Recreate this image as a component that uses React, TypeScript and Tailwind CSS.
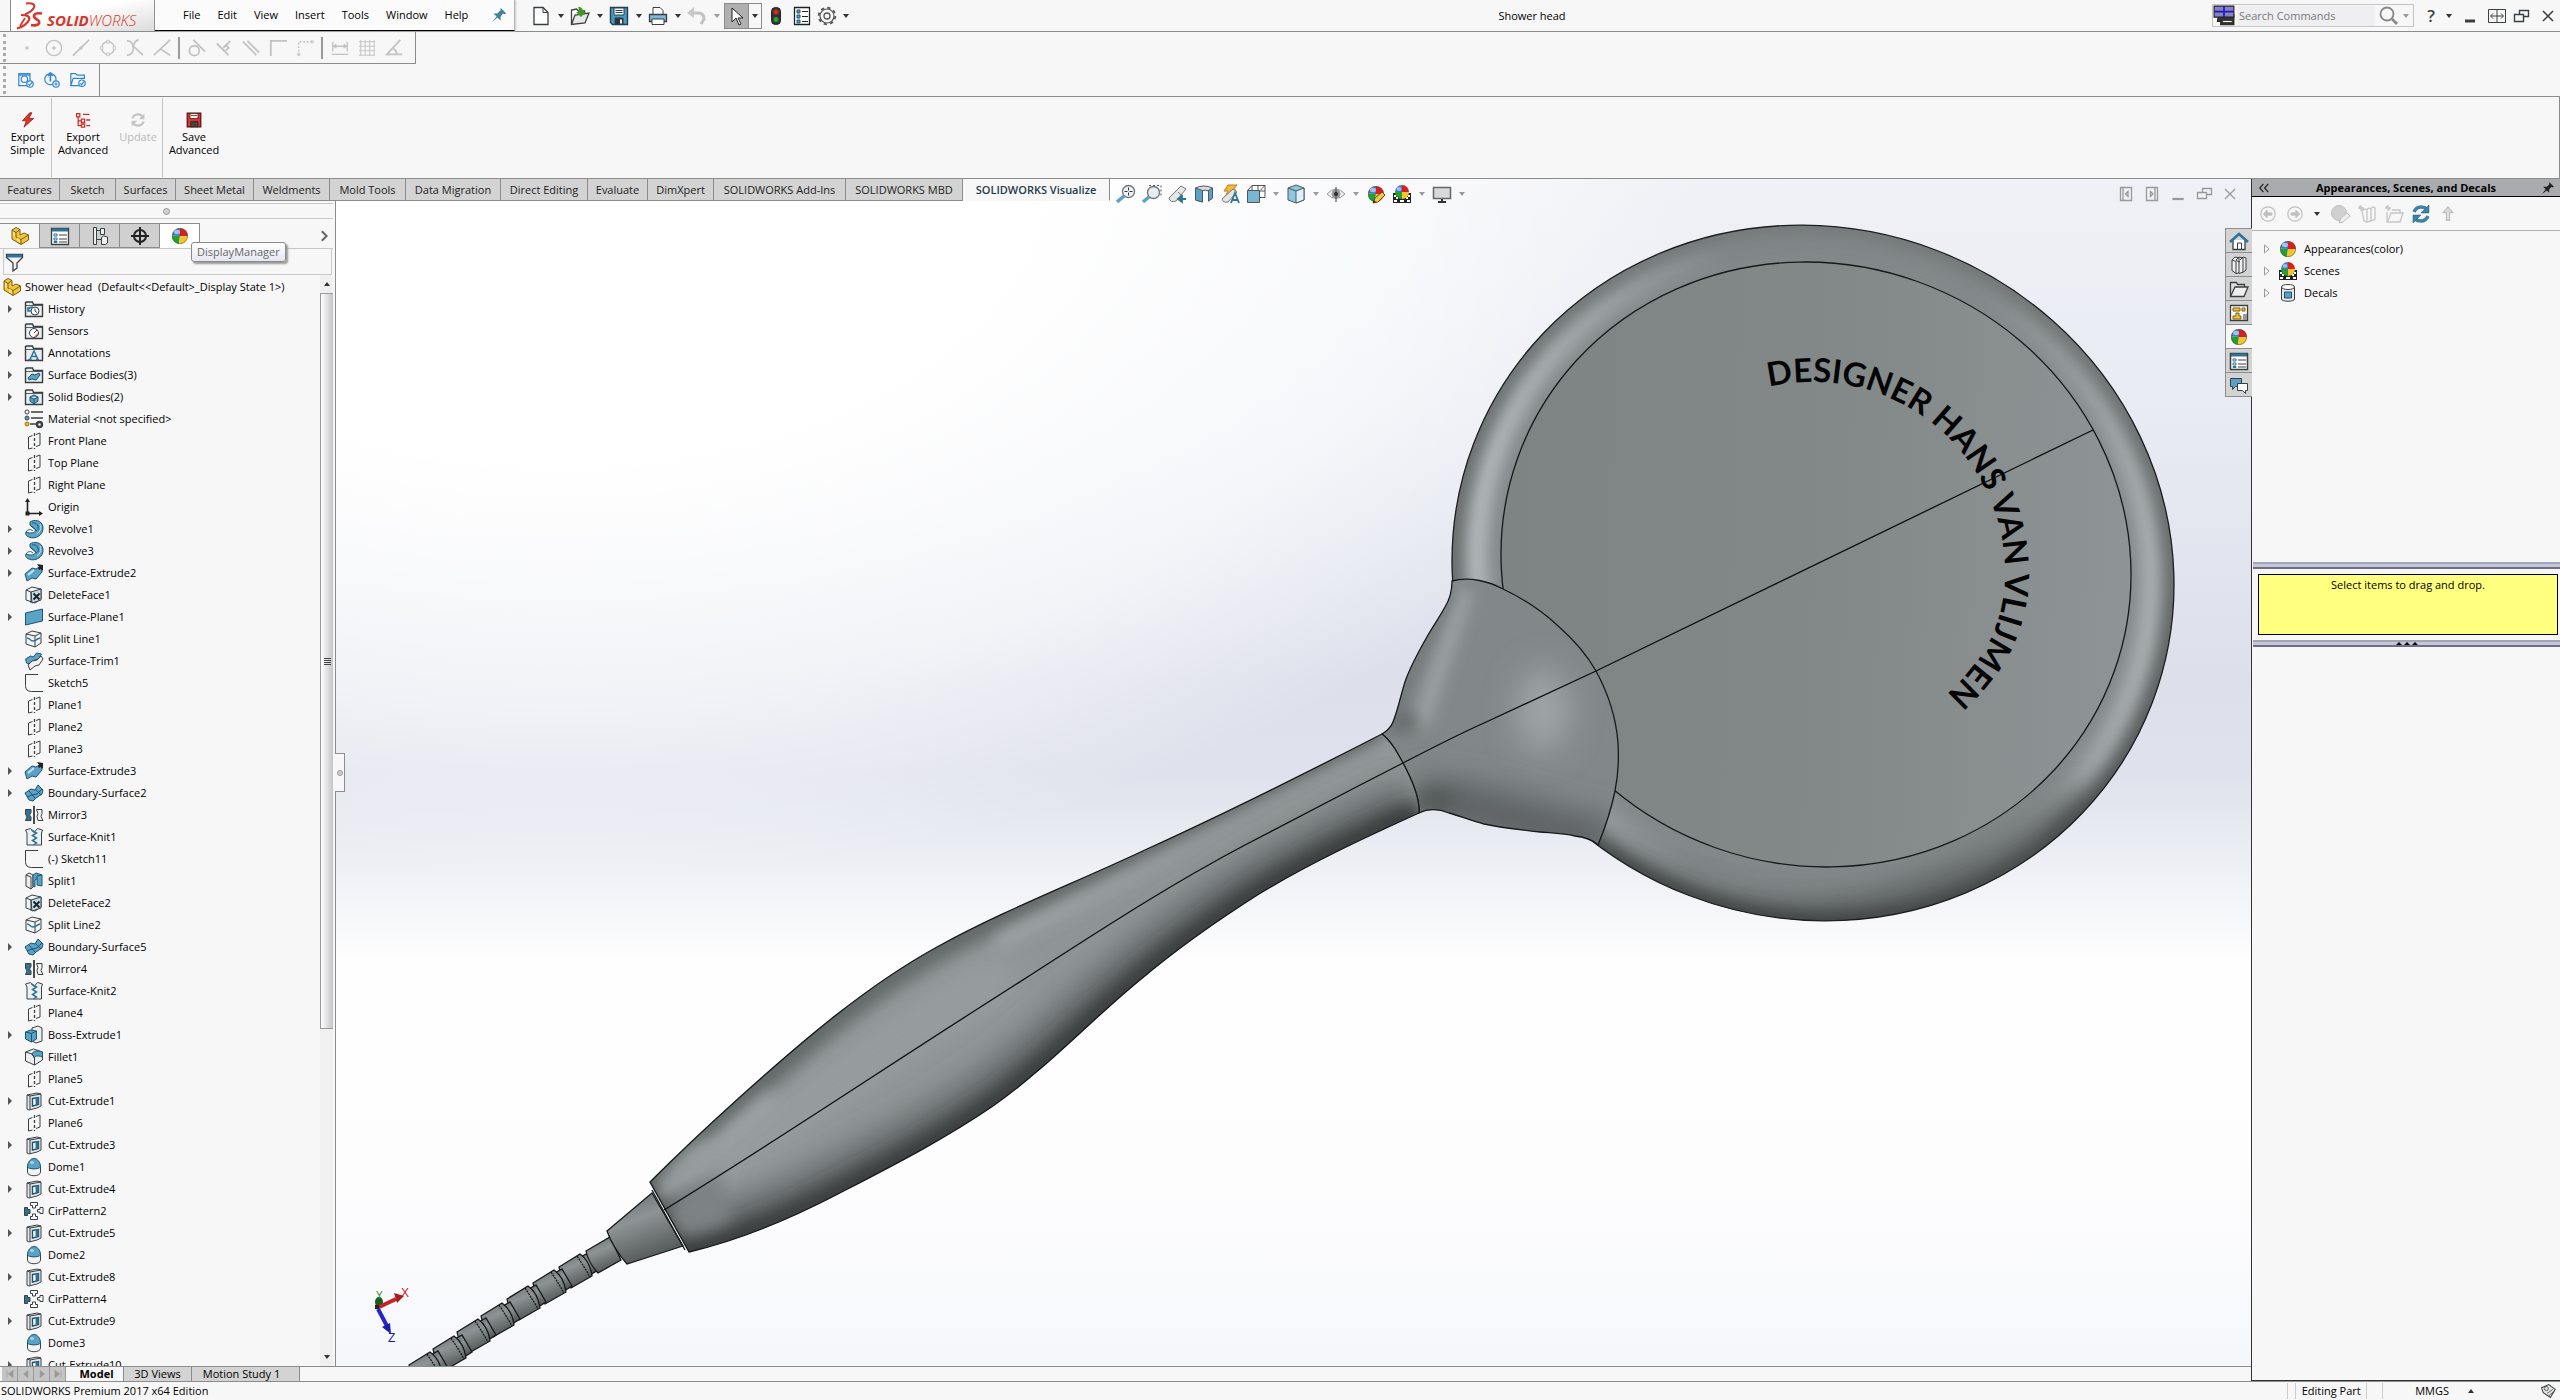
import type { ReactNode } from "react";

// ─── Helpers ──────────────────────────────────────────────────────────────────

interface IconProps {
  children: ReactNode;
  className?: string;
  stroke?: string;
}

function Icon({ children, className = "w-5 h-5", stroke = "#3a3f42" }: IconProps) {
  return (
    <svg viewBox="0 0 20 20" className={`shrink-0 ${className}`} fill="none" stroke={stroke} aria-hidden="true">
      {children}
    </svg>
  );
}

function Caret({ dim = false }: { dim?: boolean }) {
  return (
    <svg viewBox="0 0 6 4" className="w-[6px] h-1" aria-hidden="true">
      <path d="M0 0h6L3 4z" fill={dim ? "#9a9a9a" : "#333"} />
    </svg>
  );
}

function Ball() {
  return (
    <Icon stroke="none">
      <path d="M10 10V2a8 8 0 0 0-8 7.500z" fill="#3e78c8" />
      <path d="M10 10V2a8 8 0 0 1 8 8.500z" fill="#d4201f" />
      <path d="M10 10L2 9.500A8 8 0 0 0 9 18z" fill="#26a02c" />
      <path d="M10 10L9 18a8 8 0 0 0 9-7.500z" fill="#f2c530" />
      <circle cx="10" cy="10" r="7.600" stroke="#444" strokeOpacity=".45" />
      <ellipse cx="7" cy="6" rx="3" ry="2.200" fill="#fff" fillOpacity=".55" />
    </Icon>
  );
}

function SceneBall() {
  return (
    <Icon stroke="none">
      <path d="M1 9h18v10H1z" fill="#222" />
      <path d="M2 11h2v2H2zM16 11h2v2h-2zM4 13h2v2H4zM14 13h2v2h-2zM2 16h3v2H2zM8 16h4v2H8zM15 16h3v2h-3z" fill="#fff" />
      <path d="M10 8V1a7 7 0 0 0-7 7z" fill="#3e78c8" />
      <path d="M10 8V1a7 7 0 0 1 7 7z" fill="#d4201f" />
      <path d="M10 8H3a7 7 0 0 0 7 7z" fill="#26a02c" />
      <path d="M10 8v7a7 7 0 0 0 7-7z" fill="#f2c530" />
      <ellipse cx="7" cy="5" rx="2.500" ry="2" fill="#fff" fillOpacity=".5" />
    </Icon>
  );
}

const BLUE = "#5ba3c6";
const DARK_BLUE = "#2f7396";

// ─── Tree icons ───────────────────────────────────────────────────────────────

function PartIcon() {
  return (
    <Icon stroke="#7a5c10">
      <path d="M2 4l4-2.500 4 2V9l4-2 4.500 2v5L11 18.500 2 13z" fill="#f3c63a" />
      <path d="M2 4l4 2.500 4-3M6 6.500V11l5 2.500L18.500 9M11 13.500v5" />
      <path d="M3 5.500l2 1.500v4l-2-1zM7 11.500l3 2v3l-3-2z" fill="#fbe38c" stroke="none" />
    </Icon>
  );
}

function Folder({ children }: { children: ReactNode }) {
  return (
    <Icon>
      <path d="M1.500 3.500v14h17v-12h-9l-1-2.500h-6z" fill="#e9edef" strokeWidth="1.400" />
      <path d="M1.500 6.500h17" strokeWidth=".8" />
      {children}
    </Icon>
  );
}

const TREE_ICONS: Record<string, ReactNode> = {
  history: (
    <Folder>
      <circle cx="11" cy="12" r="4" fill="#fff" />
      <path d="M11 9.500V12l2 1.500" />
      <path d="M4 11a6 4 0 0 1 5-3M4 8v4h3" stroke={DARK_BLUE} strokeWidth="1.500" />
    </Folder>
  ),
  sensor: (
    <Folder>
      <circle cx="10" cy="12" r="4.500" fill="#fff" />
      <path d="M10 12l3-3" />
      <path d="M14 12a4 4 0 0 1-4 4z" fill="#d34a35" stroke="none" />
    </Folder>
  ),
  annotation: (
    <Folder>
      <path d="M6 16.500L10 8l4 8.500M7.500 13.500h5M4.500 16.500h3M12 16.500h3" stroke={DARK_BLUE} strokeWidth="1.500" />
    </Folder>
  ),
  surfaceFolder: (
    <Folder>
      <path d="M4 13l4-4 3 1 4-2 1 2-4 5-4-1-3 1z" fill={BLUE} stroke="#1e5470" />
    </Folder>
  ),
  solidFolder: (
    <Folder>
      <path d="M6 10l4-2 4 2v4l-4 3-4-3zM6 10l4 2 4-2M10 12v5" fill={BLUE} stroke="#1e5470" />
    </Folder>
  ),
  material: (
    <Icon>
      <path d="M7 3h12M7 9h12M6 15h8" strokeWidth="1.500" />
      <circle cx="3" cy="3" r="2" fill="#fff" />
      <circle cx="3" cy="9" r="2" fill={BLUE} />
      <circle cx="3" cy="15" r="2" fill="#f3b52e" stroke="#9c7413" />
      <circle cx="15.500" cy="15.500" r="2.500" strokeWidth="2.400" />
    </Icon>
  ),
  plane: (
    <Icon>
      <path d="M4.500 6v12l4-1M4.500 6l4-1.500M12 3.500l4-1.500v12l-4 1.500" />
      <path d="M10.500 2v16" strokeDasharray="3 2" strokeWidth="1.300" />
    </Icon>
  ),
  origin: (
    <Icon stroke="#222">
      <path d="M3.500 4v12.500H16" strokeWidth="1.600" />
      <path d="M3.500 1L1 5h5zM19 16.500l-4-2.500v5zM1.500 14.500h4v4h-4z" fill="#222" stroke="none" />
    </Icon>
  ),
  revolve: (
    <Icon stroke="#1e5470">
      <path d="M6 3c4-3 12-2 13 5 1 8-8 13-14 10-3-1-4-3-3-5 5 2 9 1 10-2L6 6z" fill={BLUE} />
      <path d="M2 13c2-3 5-3 7-1M7 7l6 5M8 4c5-1 7 3 6 7" />
      <path d="M16 5c2 4 0 8-3 10" stroke="#bfe0ef" />
    </Icon>
  ),
  surfaceExtrude: (
    <Icon stroke="#1e5470">
      <path d="M1 11l7-6 4 1 5-3 1 6-6 7-4-1-5 3z" fill={BLUE} />
      <path d="M4 12l6-5" stroke="#c6e4f1" strokeWidth="2" />
      <path d="M13 1l6 1v6l-2-2-2 1-1-2 1-1z" fill="#222" stroke="none" />
    </Icon>
  ),
  deleteFace: (
    <Icon>
      <path d="M2 5l6-3 9 2v10l-6 4-9-3z" fill="#f2f4f5" />
      <path d="M7 7l10-3v11l-9 3z" fill="#bfe0ef" />
      <path d="M2 5l5 2v11" />
      <path d="M9.500 8.500l6 6M15.500 8.500l-6 6" stroke="#222" strokeWidth="2" />
    </Icon>
  ),
  surfacePlane: (
    <Icon stroke="#1e5470">
      <path d="M1.500 6l17-4v12l-17 4z" fill={BLUE} />
    </Icon>
  ),
  splitLine: (
    <Icon>
      <path d="M2 5l6-3 9 2v10l-6 4-9-3z" fill="#f2f4f5" />
      <path d="M2 5l9 2 6-3M11 7v11" />
      <path d="M3 9c3 0 3 3 6 3s3-2 7-3" stroke={DARK_BLUE} strokeWidth="1.500" />
    </Icon>
  ),
  surfaceTrim: (
    <Icon>
      <path d="M1.500 8l5-3 3 1 3-4 5 1-3 5-4 1-4 4-4-1z" fill={BLUE} stroke="#1e5470" />
      <path d="M4 14l4-4 5-1 4-4 2 3-4 6-4 1-5 4z" fill="#f0f0f0" />
    </Icon>
  ),
  sketch: (
    <Icon>
      <path d="M14 1.500H1.500v11q0 6 6 6H19" />
    </Icon>
  ),
  boundary: (
    <Icon stroke="#1e5470">
      <path d="M1 10l6-4 4 1 3-5 5 5-1 4-6 4-3 3-4-1z" fill={BLUE} />
      <path d="M5 8l6 7M11 6l6 6M3 14l5-2 5-1 5-5" />
    </Icon>
  ),
  mirror: (
    <Icon>
      <path d="M1.500 4.500H7v3L5.500 10 7 12v3.500H1.500L3 12 1.500 9z" fill={DARK_BLUE} />
      <path d="M12.500 4.500H18v4l-1 3 2 4h-5l-1-4 1-3z" fill="#f2f2f2" />
      <path d="M10 1v18" stroke="#111" strokeWidth="1.500" />
    </Icon>
  ),
  knit: (
    <Icon>
      <path d="M1.500 3l5-1.500 3.500 4 3.500-4 5 1.500-1 3v12H3V6z" fill="#eef1f2" />
      <path d="M7.500 3l5 3-4 2.500 4 2.500-4 2.500 4 2.500-3 2" stroke={DARK_BLUE} strokeWidth="1.500" />
    </Icon>
  ),
  split: (
    <Icon>
      <path d="M2 4l3-2 4 2v12l-2 2-5-3z" fill="#eee" />
      <path d="M2 4l5 2v12" />
      <path d="M9 4l3-2 6 2v11l-5-1V8l-2 1v7l-2-1z" fill={BLUE} stroke="#1e5470" />
      <path d="M13 8V5l5-1" stroke="#1e5470" />
    </Icon>
  ),
  boss: (
    <Icon>
      <path d="M8 3l6-2 4 2v13l-6 2-4-2z" fill="#eee" />
      <path d="M1.500 7l5-2 6 1v8l-5 3-6-3z" fill={BLUE} stroke="#1e5470" />
      <path d="M1.500 7l6 1.500 5-2.500M7.500 8.500V17" stroke="#1e5470" />
    </Icon>
  ),
  fillet: (
    <Icon>
      <path d="M1.500 5l8-3 9 3v8l-8 5-9-4z" fill="#eee" />
      <path d="M8 7c1-3 5-4 10.500-2v5c-5-2-8-1-8 1z" fill={BLUE} stroke="#1e5470" />
      <path d="M1.500 5L8 7l2.500 4v7" />
    </Icon>
  ),
  cut: (
    <Icon>
      <path d="M3 4l10-2 4 1v12l-4 2-8 2-2-1z" fill="#e4e8ea" />
      <path d="M3 4l3 1 11-2M6 5v13.500" />
      <path d="M8.500 7.500l6-1v7l-6 1.500z" fill="#fff" stroke="#1e5470" strokeWidth="1.400" />
      <path d="M11.500 7l3-.5v6.500l-3 .5z" fill={DARK_BLUE} stroke="none" />
    </Icon>
  ),
  dome: (
    <Icon>
      <path d="M3.500 9v6c0 5 13 5 13 0V9z" fill="#f5f5f5" />
      <path d="M3.500 10a6.500 8.500 0 0 1 13 0c-2 2.500-11 2.500-13 0z" fill={BLUE} stroke="#1e5470" />
      <ellipse cx="8" cy="5.500" rx="2" ry="1.500" fill="#fff" fillOpacity=".5" stroke="none" />
    </Icon>
  ),
  pattern: (
    <Icon>
      <path d="M6.500 1.500h7v3h-2V7h-3V4.500h-2zM6.500 18.500h7v-3h-2V13h-3v2.500h-2zM19 6.500v6h-3v-1.500h-2.500V8.500H16v-2z" fill="#fff" />
      <path d="M.5 6.500h3v2H6v4H3.500v2h-3z" fill={DARK_BLUE} />
    </Icon>
  ),
};

interface TreeItem {
  icon: string;
  label: string;
  open?: boolean;
}

const TREE: TreeItem[] = [
  { icon: "history", label: "History", open: true },
  { icon: "sensor", label: "Sensors" },
  { icon: "annotation", label: "Annotations", open: true },
  { icon: "surfaceFolder", label: "Surface Bodies(3)", open: true },
  { icon: "solidFolder", label: "Solid Bodies(2)", open: true },
  { icon: "material", label: "Material <not specified>" },
  { icon: "plane", label: "Front Plane" },
  { icon: "plane", label: "Top Plane" },
  { icon: "plane", label: "Right Plane" },
  { icon: "origin", label: "Origin" },
  { icon: "revolve", label: "Revolve1", open: true },
  { icon: "revolve", label: "Revolve3", open: true },
  { icon: "surfaceExtrude", label: "Surface-Extrude2", open: true },
  { icon: "deleteFace", label: "DeleteFace1" },
  { icon: "surfacePlane", label: "Surface-Plane1", open: true },
  { icon: "splitLine", label: "Split Line1" },
  { icon: "surfaceTrim", label: "Surface-Trim1" },
  { icon: "sketch", label: "Sketch5" },
  { icon: "plane", label: "Plane1" },
  { icon: "plane", label: "Plane2" },
  { icon: "plane", label: "Plane3" },
  { icon: "surfaceExtrude", label: "Surface-Extrude3", open: true },
  { icon: "boundary", label: "Boundary-Surface2", open: true },
  { icon: "mirror", label: "Mirror3" },
  { icon: "knit", label: "Surface-Knit1" },
  { icon: "sketch", label: "(-) Sketch11" },
  { icon: "split", label: "Split1" },
  { icon: "deleteFace", label: "DeleteFace2" },
  { icon: "splitLine", label: "Split Line2" },
  { icon: "boundary", label: "Boundary-Surface5", open: true },
  { icon: "mirror", label: "Mirror4" },
  { icon: "knit", label: "Surface-Knit2" },
  { icon: "plane", label: "Plane4" },
  { icon: "boss", label: "Boss-Extrude1", open: true },
  { icon: "fillet", label: "Fillet1" },
  { icon: "plane", label: "Plane5" },
  { icon: "cut", label: "Cut-Extrude1", open: true },
  { icon: "plane", label: "Plane6" },
  { icon: "cut", label: "Cut-Extrude3", open: true },
  { icon: "dome", label: "Dome1" },
  { icon: "cut", label: "Cut-Extrude4", open: true },
  { icon: "pattern", label: "CirPattern2" },
  { icon: "cut", label: "Cut-Extrude5", open: true },
  { icon: "dome", label: "Dome2" },
  { icon: "cut", label: "Cut-Extrude8", open: true },
  { icon: "pattern", label: "CirPattern4" },
  { icon: "cut", label: "Cut-Extrude9", open: true },
  { icon: "dome", label: "Dome3" },
  { icon: "cut", label: "Cut-Extrude10", open: true },
];

// ─── Title bar ────────────────────────────────────────────────────────────────

const QUICK_TOOLS: { label: string; dim?: boolean; icon: ReactNode }[] = [
  {
    label: "New",
    icon: (
      <Icon>
        <path d="M3 1.500h9l5 5v12H3z" fill="#fff" strokeWidth="1.300" />
        <path d="M12 1.500v5h5" />
      </Icon>
    ),
  },
  {
    label: "Open",
    icon: (
      <Icon>
        <path d="M1.500 18V4l5-1 2 2h6v4" fill="#fff" strokeWidth="1.300" />
        <path d="M1.500 18.500L5 9l14-2-4 10z" fill="#e8e8e8" strokeWidth="1.300" />
        <path d="M8 1c4 0 5 2 5 5h3l-5 5-5-5h3c0-2 0-3-1-5z" fill="#3e9a1e" stroke="none" />
      </Icon>
    ),
  },
  {
    label: "Save",
    icon: (
      <Icon stroke="#1d4356">
        <path d="M1.500 1.500h17v17h-15l-2-2z" fill="#4f97bb" strokeWidth="1.400" />
        <path d="M5 2h10v7H5z" fill="#fff" />
        <path d="M6.500 4.500h7M6.500 6.500h7" />
        <path d="M6 12h8v6.500H6z" fill="#333" />
        <path d="M11 13.500h2v4h-2z" fill="#eee" stroke="none" />
      </Icon>
    ),
  },
  {
    label: "Print",
    icon: (
      <Icon>
        <path d="M5 8V1.500h7l3 3V8" fill="#fff" />
        <path d="M1.500 8.500h17v7h-17z" fill="#7db9d6" strokeWidth="1.300" />
        <path d="M4 13h12v5.500H4z" fill="#fff" />
      </Icon>
    ),
  },
  {
    label: "Undo",
    dim: true,
    icon: (
      <Icon stroke="#c2c2c2">
        <path d="M3 7h8q6 0 6 6l-3 5" strokeWidth="3" />
        <path d="M7 1v11L0 7z" fill="#c9c9c9" stroke="none" />
      </Icon>
    ),
  },
];

function TitleBar() {
  return (
    <header className="flex h-8 shrink-0 border-b border-[#8c8c8c] pl-[10px]">
      <div className="flex w-[145px] items-center gap-1 border-x border-[#8c8c8c] bg-linear-to-br from-white from-40% to-[#dcdcdc] pl-1 text-[#d2362c]">
        <svg viewBox="0 0 28 28" className="w-7 h-7 shrink-0" fill="none" stroke="#d2362c" aria-hidden="true">
          <path d="M11 1.500q10-1 8 4-2 4-9 7" strokeWidth="2" />
          <path d="M6 13q10 0 8 5-3 6-12 8.500" strokeWidth="2.200" />
          <path d="M10 16L5 24" strokeWidth="1.800" />
          <path d="M27 11.500q-7-1-8 2-.5 2 3 4 4 2.500 1 5-3 1.500-7 .5" strokeWidth="2.600" />
        </svg>
        <span className="pt-2 text-[15px] italic leading-4 font-['Open_Sans',sans-serif]">
          <b>SOLID</b>
          <span className="font-light">WORKS</span>
        </span>
      </div>

      <nav className="flex w-[360px] items-center gap-[17px] border-r border-b border-r-[#b5b5b5] border-b-black bg-[#fbfbfb] pl-7 pr-[7px] shadow-[1px_0_2px_#ccc]">
        {["File", "Edit", "View", "Insert", "Tools", "Window", "Help"].map((item) => (
          <button key={item}>{item}</button>
        ))}
        <button aria-label="Pin menu" className="ml-auto">
          <Icon className="w-4 h-4" stroke="none">
            <path d="M12 1l7 7-2 1-2-1-3 4v5l-4-4-7 6 6-7-4-4h5l4-4z" fill="#3f7f9f" />
          </Icon>
        </button>
      </nav>

      <div className="flex items-center pl-[14px]">
        {QUICK_TOOLS.map((tool) => (
          <div key={tool.label} className="flex items-center">
            <button aria-label={tool.label} className="flex w-6 justify-center">{tool.icon}</button>
            <button aria-label={`${tool.label} options`} className="flex w-[15px] justify-center">
              <Caret dim={tool.dim} />
            </button>
          </div>
        ))}
        <button aria-label="Select" className="flex h-[26px] w-[25px] items-center justify-center border border-[#8c8c8c] bg-[#b0b0b0]">
          <Icon stroke="#222">
            <path d="M5 2v14l4-4 3 7 2-1-3-6h5z" fill="#fff" />
          </Icon>
        </button>
        <button aria-label="Select options" className="flex h-[26px] w-[13px] items-center justify-center border border-l-0 border-[#8c8c8c]">
          <Caret />
        </button>
        <button aria-label="Rebuild" className="flex w-7 justify-center">
          <Icon stroke="#222">
            <rect x="5.500" y="1.500" width="9" height="17" rx="4" fill="#333" />
            <circle cx="10" cy="6" r="2.500" fill="#d32a1e" stroke="none" />
            <circle cx="10" cy="13.500" r="2.500" fill="#2ba02b" stroke="none" />
          </Icon>
        </button>
        <button aria-label="File properties" className="flex w-6 justify-center">
          <Icon stroke="#222">
            <path d="M2.500 1.500h15v17h-15z" fill="#fff" strokeWidth="1.300" />
            <path d="M5 4h3v3H5zM5 9h3v3H5zM5 14h3v3H5z" fill={BLUE} stroke="#1e5470" />
            <path d="M10 5.500h6M10 10.500h6M10 15.500h6" />
          </Icon>
        </button>
        <button aria-label="Options" className="flex w-[26px] justify-center">
          <Icon stroke="#555">
            <circle cx="10" cy="10" r="7" strokeWidth="1.200" />
            <circle cx="10" cy="10" r="8.300" strokeWidth="1.800" strokeDasharray="3.300 3.220" />
            <circle cx="10" cy="10" r="3" strokeWidth="1.300" />
          </Icon>
        </button>
        <button aria-label="More options" className="flex w-3 justify-center">
          <Caret />
        </button>
      </div>

      <h1 className="flex-1 self-center text-center">Shower head</h1>

      <label className="flex h-[23px] w-[202px] items-center self-center border border-[#c4c4c4]">
        <Icon className="w-[22px] h-[22px]" stroke="#222">
          <path d="M5 9h14v9H7v-3H4z" fill="#333" />
          <path d="M9 15h8" stroke="#fff" />
          <path d="M1 1h18v10H1z" fill="#8583c4" />
          <path d="M10 1v10M1 6h18" stroke="#1c1cb4" strokeWidth="1.500" />
        </Icon>
        <input
          type="text"
          aria-label="Search commands"
          placeholder="Search Commands"
          className="ml-[2px] h-5 w-[138px] bg-[#efeff2] pl-[2px] text-[11px] outline-none placeholder:text-[#777]"
        />
        <Icon className="ml-1 w-5 h-5" stroke="#888">
          <circle cx="8" cy="8" r="6.500" strokeWidth="1.800" />
          <path d="M13 13l5 5" strokeWidth="2.600" />
        </Icon>
        <span className="ml-1">
          <Caret dim />
        </span>
      </label>
      <div className="flex shrink-0 items-center">
        <button aria-label="Help" className="ml-[5px] w-6 text-center text-[17px] leading-6 font-semibold text-[#444]">?</button>
        <button aria-label="Help options" className="flex w-3 justify-center"><Caret /></button>
        <button aria-label="Minimize" className="ml-[3px] flex w-6 justify-center">
          <Icon><path d="M5 15h10" strokeWidth="3" /></Icon>
        </button>
        <button aria-label="Span displays" className="ml-[3px] flex w-6 justify-center">
          <Icon>
            <path d="M1.500 3.500h17v13h-17zM10 3.500v13M4 10h12M6 7.500L3.500 10 6 12.500M14 7.500l2.500 2.500-2.500 2.500" />
          </Icon>
        </button>
        <button aria-label="Restore" className="flex w-6 justify-center">
          <Icon><path d="M8.500 9V4.500h9v6H12M3.500 8.500h9v7h-9z" strokeWidth="1.400" /></Icon>
        </button>
        <button aria-label="Close" className="ml-[3px] flex w-6 justify-center">
          <Icon><path d="M5 5l10 10M15 5L5 15" strokeWidth="1.500" /></Icon>
        </button>
      </div>
    </header>
  );
}

// ─── Toolbars ─────────────────────────────────────────────────────────────────

const SNAP_GROUPS: ReactNode[][] = [
  [
    <circle cx="10" cy="10" r="1.500" fill="#d0d0d0" />,
    <><circle cx="10" cy="10" r="8.500" strokeWidth="1.500" /><circle cx="10" cy="10" r="1.500" fill="#d0d0d0" /></>,
    <><path d="M1 18.500L19 1" strokeWidth="1.800" /><circle cx="10" cy="10" r="1.500" fill="#d0d0d0" /></>,
    <><circle cx="10" cy="10" r="7" strokeWidth="1.500" /><path d="M8.500 1.500h3v3h-3zM8.500 15.500h3v3h-3zM1.500 8.500h3v3h-3zM15.500 8.500h3v3h-3z" fill="#eee" strokeWidth=".8" /></>,
    <path d="M1 2q7 0 7 8t-7 8M14 1q-5 1-6 8M8 8l11 10" strokeWidth="1.800" />,
    <path d="M19 1L1 18M8 11l11 7" strokeWidth="1.800" />,
  ],
  [
    <><circle cx="7" cy="13" r="5.500" strokeWidth="2" /><path d="M6 1l13 13" strokeWidth="2" /></>,
    <path d="M2 5l13 13M17 2L9 10M9 10l4-3 2 3-3 3" strokeWidth="2" />,
    <path d="M1 3l15 15M6 2l13 13" strokeWidth="2" />,
    <path d="M2 19V2h18" strokeWidth="2" />,
    <><path d="M3 18V3h15" strokeDasharray="2 2" strokeWidth="1.500" /><circle cx="18" cy="3" r="1.500" /><circle cx="3" cy="17" r="1.500" /></>,
  ],
  [
    <path d="M2 3v11M18 3v11M3 8h14M6 6L3 8l3 2M14 6l3 2-3 2M1 17h18" strokeWidth="1.500" />,
    <path d="M1 3h18M1 8h18M1 13h18M1 18h18M3 1v18M8 1v18M13 1v18M18 1v18" />,
    <path d="M17 1L2 17h17M8 10q5 2 5 7" strokeWidth="2" />,
  ],
];

function Grip() {
  return (
    <span className="flex w-[13px] items-center pl-[3px]">
      <span className="h-7 border-l-3 border-dotted border-[#aaa]" />
    </span>
  );
}

function Toolbars() {
  return (
    <>
      <div className="flex h-8 w-[416px] shrink-0 items-stretch border-r border-b border-[#8c8c8c]">
        <Grip />
        {SNAP_GROUPS.map((group, g) => (
          <div key={g} className="flex items-center">
            {g > 0 && <span className="mx-[3px] h-[22px] w-[2px] bg-[#9a9a9a]" />}
            {group.map((glyph, i) => (
              <button key={i} aria-label={`Snap ${g + 1}.${i + 1}`} className="flex w-[27px] justify-center">
                <Icon className="w-[18px] h-[18px]" stroke="#c2c2c2">{glyph}</Icon>
              </button>
            ))}
          </div>
        ))}
      </div>
      <div className="flex h-[33px] shrink-0 border-b border-[#8c8c8c]">
        <div className="flex w-[100px] items-center self-stretch border-r border-[#8c8c8c]">
          <Grip />
          <button aria-label="Inspect part" className="flex w-[26px] justify-center">
            <Icon className="w-4 h-4" stroke="#2f86d6">
              <path d="M1 2h14v15H1zM1 2v2h14" strokeWidth="1.500" />
              <circle cx="8" cy="9" r="4" strokeWidth="1.500" />
              <circle cx="15" cy="15" r="4" fill="#fff" strokeWidth="1.500" />
              <path d="M13 15l1.500 2 3-4" strokeWidth="1.500" />
            </Icon>
          </button>
          <button aria-label="Add balloon" className="flex w-[26px] justify-center">
            <Icon className="w-4 h-4" stroke="#2f86d6">
              <circle cx="8" cy="9" r="7" strokeWidth="1.500" />
              <path d="M8 1v11M5 5l3-4 3 4" strokeWidth="2" />
              <circle cx="15" cy="15" r="4" fill="#fff" strokeWidth="1.500" />
              <path d="M13 15h4M15 13v4" strokeWidth="1.500" />
            </Icon>
          </button>
          <button aria-label="Open project" className="flex w-[26px] justify-center">
            <Icon className="w-4 h-4" stroke="#2f86d6">
              <path d="M1 17V2h6l2 2h9v4H4L1 17h12" strokeWidth="1.500" />
              <circle cx="15" cy="14" r="4" fill="#fff" strokeWidth="1.500" />
              <path d="M13 14l1.500 2 3-4" strokeWidth="1.500" />
            </Icon>
          </button>
        </div>
      </div>
    </>
  );
}

function Ribbon() {
  return (
    <div className="flex h-[82px] shrink-0 border-r border-b border-[#8c8c8c] py-px leading-[13px]">
      <button className="flex w-[52px] flex-col items-center gap-[2px] border-r border-[#c4c4c4] pl-1 pt-[14px]">
        <Icon className="w-4 h-4" stroke="#8a1f1c">
          <path d="M12 1L3 11h5l-3 8 12-11h-6l4-7z" fill="#d8352b" />
        </Icon>
        <span>Export<br />Simple</span>
      </button>
      <div className="flex border-r border-[#c4c4c4]">
        <button className="flex w-[62px] flex-col items-center gap-[2px] pt-[14px]">
          <Icon className="w-4 h-4" stroke="#c9302c">
            <path d="M2 2h4v4H2zM8 9h4v4H8zM8 15h4v4H8zM4 6v11h4M4 11h4M10 3h8M14 10h5M14 17h5" strokeWidth="1.600" />
          </Icon>
          <span>Export<br />Advanced</span>
        </button>
        <button disabled className="flex w-12 flex-col items-center gap-[2px] pt-[14px] text-[#b9b9b9]">
          <Icon className="w-4 h-4" stroke="#c6c6c6">
            <path d="M3 8q2-5 7-5 4 0 6 3M17 12q-2 5-7 5-4 0-6-3" strokeWidth="3" />
            <path d="M18 2v7h-7zM2 18v-7h7z" fill="#c6c6c6" stroke="none" />
          </Icon>
          <span>Update</span>
        </button>
      </div>
      <button className="flex w-[62px] flex-col items-center gap-[2px] pt-[14px]">
        <Icon className="w-4 h-4" stroke="#4a1513">
          <path d="M1.500 1.500h17v17h-17z" fill="#cf3a34" strokeWidth="1.500" />
          <path d="M5 2h10v6H5z" fill="#fff" />
          <path d="M6 4.500h8" />
          <path d="M6 12h9v6.500H6z" fill="#444" />
        </Icon>
        <span>Save<br />Advanced</span>
      </button>
    </div>
  );
}

// ─── Command tabs + view toolbar ──────────────────────────────────────────────

const COMMAND_TABS = [
  { label: "Features", width: "w-[60px]" },
  { label: "Sketch", width: "w-14" },
  { label: "Surfaces", width: "w-15" },
  { label: "Sheet Metal", width: "w-[78px]" },
  { label: "Weldments", width: "w-[76px]" },
  { label: "Mold Tools", width: "w-[76px]" },
  { label: "Data Migration", width: "w-[95px]" },
  { label: "Direct Editing", width: "w-[87px]" },
  { label: "Evaluate", width: "w-[60px]" },
  { label: "DimXpert", width: "w-[66px]" },
  { label: "SOLIDWORKS Add-Ins", width: "w-[132px]" },
  { label: "SOLIDWORKS MBD", width: "w-[117px]" },
];

const VIEW_TOOLS: { label: string; icon: ReactNode; menu?: boolean }[] = [
  {
    label: "Zoom to fit",
    icon: (
      <Icon stroke="#777">
        <path d="M1 18l7-6" stroke={BLUE} strokeWidth="3.500" />
        <circle cx="12.500" cy="7.500" r="6" fill="#eef4f7" strokeWidth="1.400" />
        <path d="M12.500 3.500v3M12.500 8.500v3M8.500 7.500h3M13.500 7.500h3" stroke="#333" />
      </Icon>
    ),
  },
  {
    label: "Zoom to area",
    icon: (
      <Icon stroke="#777">
        <path d="M7 1.500h12v12" strokeDasharray="2 2" stroke="#555" />
        <path d="M1 18l6-5" stroke={BLUE} strokeWidth="3.500" />
        <circle cx="11.500" cy="8.500" r="6" fill="#e4eef3" strokeWidth="1.400" />
      </Icon>
    ),
  },
  {
    label: "Previous view",
    icon: (
      <Icon stroke="#777">
        <path d="M1 14L13 2l5 3-10 12q-6 2-7-3z" fill="#e6e6e6" />
        <path d="M10 8l4 4" />
        <path d="M18 15h-6M14 12l-4 3 4 3z" fill={DARK_BLUE} stroke={DARK_BLUE} strokeWidth="1.800" />
      </Icon>
    ),
  },
  {
    label: "Section view",
    icon: (
      <Icon stroke="#4b5a61">
        <path d="M1.500 4q8-4 17 0v10l-4 3V7q-4-2-6 0v11l-7-2z" fill="#d8dadb" />
        <path d="M1.500 4l7 2.500V18l-7-2zM14.500 6.500l4-2.500v10l-4 3z" fill={BLUE} />
      </Icon>
    ),
  },
  {
    label: "Dynamic annotation views",
    icon: (
      <Icon stroke="#777">
        <path d="M8 1h9l-4 5h3L5 13l3-6H4z" fill="#f4b63c" stroke="#b87d19" />
        <path d="M2 15L13 5l4 3-9 10q-5 1-6-3z" fill="#e6e6e6" />
        <path d="M11 19l4-10 4 10M13 16h5" stroke={DARK_BLUE} strokeWidth="1.800" />
      </Icon>
    ),
  },
  {
    label: "View orientation",
    menu: true,
    icon: (
      <Icon stroke="#555">
        <path d="M6 1.500h13v12H6zM12 1.500v12M6 7h13M1.500 6.500L6 1.500M19 1.500L14 6.500" fill="#fff" />
        <path d="M1.500 6.500h12v12h-12z" fill="#79b6d2" />
      </Icon>
    ),
  },
  {
    label: "Display style",
    menu: true,
    icon: (
      <Icon stroke="#4b5a61">
        <path d="M2 4l8-3 8 3v12l-8 3-8-3z" fill="#8fc6de" />
        <path d="M10 7l8-3v12l-8 3z" fill="#dff0f7" />
        <path d="M2 4l8 3" />
      </Icon>
    ),
  },
  {
    label: "Hide or show items",
    menu: true,
    icon: (
      <Icon stroke="#999">
        <path d="M1 10q9-10 18 0-9 9-18 0z" fill="#ececec" />
        <circle cx="10" cy="10" r="4" fill="#999" />
        <circle cx="10" cy="10" r="2" fill="#222" stroke="none" />
        <path d="M10 3v15" stroke="#444" />
      </Icon>
    ),
  },
  {
    label: "Edit appearance",
    icon: (
      <span className="relative flex">
        <Ball />
        <svg viewBox="0 0 20 20" className="absolute inset-0 w-5 h-5" aria-hidden="true">
          <path d="M7 19l2-5 7-6 3 3-7 7z" fill="#f0c64c" stroke="#6b4a12" />
          <path d="M7 19l1-3 2 2z" fill="#222" />
        </svg>
      </span>
    ),
  },
  { label: "Apply scene", menu: true, icon: <SceneBall /> },
  {
    label: "View settings",
    menu: true,
    icon: (
      <Icon stroke="#666">
        <path d="M1.500 3.500h17v11h-17z" fill="#d9d9d9" strokeWidth="1.500" />
        <path d="M10 15v3M6 18h8" stroke="#333" strokeWidth="2" />
      </Icon>
    ),
  },
];

function CommandTabs() {
  return (
    <div className="relative flex h-[30px] shrink-0">
      <div className="flex h-[22px] text-[#222]">
        {COMMAND_TABS.map((tab) => (
          <button
            key={tab.label}
            className={`${tab.width} border-r border-b border-[#8c8c8c] bg-[#d3d3d3] text-center whitespace-nowrap`}
          >
            {tab.label}
          </button>
        ))}
        <button className="w-[147px] border-r border-b border-r-[#8c8c8c] border-b-[#f7f7f7] bg-[#f7f7f7] text-center font-semibold whitespace-nowrap text-[#1e3c4c]">
          SOLIDWORKS Visualize
        </button>
      </div>
      <div className="flex flex-1 items-center pl-[3px]">
        {VIEW_TOOLS.map((tool) => (
          <div key={tool.label} className="flex items-center">
            <button aria-label={tool.label} className="flex w-[26px] justify-center">{tool.icon}</button>
            {tool.menu && (
              <button aria-label={`${tool.label} menu`} className="flex w-[14px] justify-center">
                <Caret dim />
              </button>
            )}
          </div>
        ))}
      </div>
      <div className="flex items-center pr-2">
        {[
          { label: "Collapse left pane", d: "M4.500 3.500h11v13h-11zM7 3v14M12 7.500L9.500 10l2.500 2.500z" },
          { label: "Collapse right pane", d: "M4.500 3.500h11v13h-11zM13 3v14M8.500 7.500L11 10l-2.500 2.500z" },
          { label: "Minimize document", d: "M5 14.500h10v1H5z" },
          { label: "Restore document", d: "M8.500 9V4.500h9v6H12M3.500 8.500h9v6h-9z" },
          { label: "Close document", d: "M5 5l10 10M15 5L5 15" },
        ].map((item) => (
          <button key={item.label} aria-label={item.label} className="flex w-[26px] justify-center">
            <Icon stroke="#999"><path d={item.d} strokeWidth="1.300" /></Icon>
          </button>
        ))}
      </div>
    </div>
  );
}

// ─── 3D model ─────────────────────────────────────────────────────────────────

const HANDLE_TOP =
  "M1382 734C1304 774 1226 813 1147 849C1075 883 1004 910 937 947C866 986 800 1043 740 1097C710 1124 680 1152 650 1182";
const HANDLE_BOTTOM =
  "L689 1252C740 1240 790 1219 838 1194C892 1166 945 1139 993 1106C1047 1068 1091 1020 1140 980C1178 948 1218 920 1259 894C1310 863 1364 838 1419 813";
const RING = "C1420 797 1410 776 1403 763C1397 752 1391 741 1382 734";
const HANDLE = `${HANDLE_TOP}${HANDLE_BOTTOM}${RING}Z`;
const NECK =
  "M1382 734C1387 731 1391 727 1393 722C1399 707 1401 693 1406 679C1412 663 1420 649 1428 635C1434 625 1440 616 1445 607C1450 599 1452 591 1452 581C1470 576 1490 582 1503 589C1522 598 1541 610 1557 625C1573 639 1586 653 1596 671C1608 693 1616 717 1618 743C1619 760 1618 776 1615 791C1611 811 1605 828 1598 845C1592 839 1583 837 1575 836C1563 833 1551 833 1540 832C1521 830 1502 828 1484 824C1472 821 1460 816 1449 813C1439 809 1429 808 1419 813C1420 797 1410 776 1403 763C1397 752 1391 741 1382 734Z";
const CENTER_LINE =
  "M664 1210C770 1145 874 1075 979 1008C1066 953 1152 894 1245 845C1297 818 1350 790 1403 763C1430 749 1457 735 1484 723L1596 671L2093 430";
// hose segments, from the cone down to the edge of the view
const BEADS = [
  [559, 1267], [533, 1283], [507, 1299], [481, 1316], [457, 1332], [433, 1349], [409, 1365],
];

function Viewport() {
  return (
    <svg
      viewBox="0 179 2251 1187"
      preserveAspectRatio="xMinYMin slice"
      className="absolute inset-0 w-full h-full"
      role="img"
      aria-label="Shower head model"
    >
      <defs>
        <linearGradient id="sky" x1="0" y1="0" x2="0" y2="1">
          <stop offset="0" stopColor="#f0f1f6" />
          <stop offset=".2" stopColor="#e8ebf3" />
          <stop offset=".42" stopColor="#dddfeb" />
          <stop offset=".5" stopColor="#dfe1ec" />
          <stop offset=".57" stopColor="#eceef4" />
          <stop offset=".66" stopColor="#fefefe" />
          <stop offset=".85" stopColor="#fdfdfe" />
          <stop offset="1" stopColor="#f6f7fb" />
        </linearGradient>
        <radialGradient id="glow" gradientUnits="userSpaceOnUse" cx="0" cy="0" r="1" gradientTransform="translate(560 179) scale(1150 700)">
          <stop offset=".4" stopColor="#fff" />
          <stop offset=".75" stopColor="#fff" stopOpacity=".6" />
          <stop offset="1" stopColor="#fff" stopOpacity="0" />
        </radialGradient>
        <linearGradient id="face" x1="0" y1=".5" x2="1" y2=".2">
          <stop offset="0" stopColor="#7e8384" />
          <stop offset=".5" stopColor="#838989" />
          <stop offset="1" stopColor="#909697" />
        </linearGradient>
        {/* the two rim gradients live in the head's own rotated space */}
        <linearGradient id="rimShade" gradientUnits="userSpaceOnUse" x1="-120" y1="-330" x2="120" y2="330">
          <stop offset="0" stopColor="#737879" />
          <stop offset=".5" stopColor="#65696a" />
          <stop offset="1" stopColor="#3b3f3f" />
        </linearGradient>
        <linearGradient id="rimLight" gradientUnits="userSpaceOnUse" x1="-338" y1="100" x2="338" y2="-110">
          <stop offset="0" stopColor="#b6bcbe" />
          <stop offset=".16" stopColor="#a0a6a8" />
          <stop offset=".35" stopColor="#808687" />
          <stop offset=".7" stopColor="#828889" />
          <stop offset=".88" stopColor="#9ba1a2" />
          <stop offset="1" stopColor="#afb5b6" />
        </linearGradient>
        <linearGradient id="bead" x1=".3" y1="0" x2=".7" y2="1">
          <stop offset="0" stopColor="#6e7475" />
          <stop offset=".35" stopColor="#8e9495" />
          <stop offset="1" stopColor="#484d4d" />
        </linearGradient>
        <filter id="soft8" filterUnits="userSpaceOnUse" x="-600" y="-600" width="3400" height="2400">
          <feGaussianBlur stdDeviation="8" />
        </filter>
        <filter id="soft16" filterUnits="userSpaceOnUse" x="-600" y="-600" width="3400" height="2400">
          <feGaussianBlur stdDeviation="16" />
        </filter>
        <clipPath id="handleClip"><path d={HANDLE} /></clipPath>
        <clipPath id="neckClip"><path d={NECK} /></clipPath>
        <clipPath id="headClip"><ellipse rx="363.200" ry="345.500" transform="translate(1813 573) rotate(20.900)" /></clipPath>
        <path id="engraving" d="M1769 387A192 192 0 0 1 2005 574C2005 622 1984 662 1942 698L1900 730" />
      </defs>

      <rect y="179" width="2251" height="1187" fill="url(#sky)" />
      <rect y="179" width="2251" height="1187" fill="url(#glow)" />

      {/* Head */}
      <g clipPath="url(#headClip)">
        <rect x="1440" y="210" width="750" height="730" fill="#83898a" />
        <ellipse rx="340" ry="322" transform="translate(1814 569) rotate(20.900)" fill="none" stroke="url(#rimLight)" strokeWidth="22" filter="url(#soft8)" />
        <ellipse rx="368" ry="350" transform="translate(1813 573) rotate(20.900)" fill="none" stroke="url(#rimShade)" strokeWidth="26" filter="url(#soft8)" />
        <path d="M1600 870Q1850 1000 2090 800" fill="none" stroke="#454949" strokeWidth="34" opacity=".7" filter="url(#soft16)" />
      </g>
      <ellipse rx="363.200" ry="345.500" transform="translate(1813 573) rotate(20.900)" fill="none" stroke="#1c1f20" strokeWidth="1.300" />
      <ellipse rx="316.800" ry="300.600" transform="translate(1816 564.500) rotate(19.700)" fill="url(#face)" stroke="#16191a" strokeWidth="1.300" />

      {/* Neck */}
      <g clipPath="url(#neckClip)">
        <path d={NECK} fill="#828889" />
        <path d="M1466 590C1445 650 1432 690 1420 725" fill="none" stroke="#a6acad" strokeWidth="12" filter="url(#soft8)" />
        <path d="M1385 734C1405 680 1430 630 1450 590" fill="none" stroke="#666b6c" strokeWidth="8" filter="url(#soft8)" />
        <ellipse cx="1543" cy="710" rx="26" ry="42" fill="#a0a6a7" filter="url(#soft16)" />
        <path d="M1415 800C1480 800 1530 828 1610 842" fill="none" stroke="#5c6162" strokeWidth="44" filter="url(#soft16)" />
        <ellipse cx="1436" cy="800" rx="22" ry="10" fill="#555a5a" filter="url(#soft8)" />
        <ellipse cx="1405" cy="722" rx="12" ry="12" fill="#666b6c" filter="url(#soft8)" />
      </g>
      <path d={NECK} fill="none" stroke="#16191a" strokeWidth="1.300" />

      {/* Handle */}
      <g clipPath="url(#handleClip)">
        <path d={HANDLE} fill="#8f9596" />
        <path d="M700 1180C800 1110 900 1030 1010 970" fill="none" stroke="#979d9f" strokeWidth="50" filter="url(#soft16)" />
        <path d={HANDLE_TOP} fill="none" stroke="#646969" strokeWidth="30" filter="url(#soft8)" />
        <path d="M664 1192C700 1158 730 1130 770 1098M1000 940C1100 890 1200 838 1390 745" fill="none" stroke="#a8aeb0" strokeWidth="10" strokeLinecap="round" filter="url(#soft8)" />
        <path d={`M650 1182${HANDLE_BOTTOM}`} fill="none" stroke="#5c6162" strokeWidth="66" filter="url(#soft16)" />
        <path d={`M650 1182${HANDLE_BOTTOM}`} fill="none" stroke="#3a3e3e" strokeWidth="26" filter="url(#soft8)" />
        <path d="M652 1186L662 1205L740 1160L700 1140Z" fill="#979d9f" filter="url(#soft8)" />
        <path d="M664 1206L682 1240L730 1220L720 1170Z" fill="#7d8384" filter="url(#soft8)" />
      </g>
      <path d={HANDLE} fill="none" stroke="#16191a" strokeWidth="1.300" />
      <path d={CENTER_LINE} fill="none" stroke="#0c0e0e" strokeWidth="1.300" />

      {/* Cone and hose */}
      <g stroke="#16191a" strokeWidth="1.300">
        {BEADS.map(([x, y]) => (
          <g key={x}>
            <path d={`M${x + 20} ${y - 9}L${x + 29} ${y - 14}L${x + 39} ${y + 3}L${x + 31} ${y + 8}Z`} fill="url(#bead)" />
            <path d={`M${x} ${y}L${x + 21} ${y - 13}Q${x + 31} ${y - 6} ${x + 33} ${y + 9}L${x + 12} ${y + 21}Q${x + 2} ${y + 12} ${x} ${y}Z`} fill="url(#bead)" />
            <path d={`M${x + 18} ${y - 11}Q${x + 26} ${y + 1} ${x + 31} ${y + 10}`} fill="none" strokeDasharray="2 1" />
          </g>
        ))}
        <path d="M586 1251L610 1237L621 1260L598 1273Q588 1262 586 1251Z" fill="url(#bead)" />
        <path d="M607 1231L652 1193L683 1246L627 1264Q613 1248 607 1231Z" fill="url(#bead)" />
        <path d="M652 1190L685 1250" fill="none" />
      </g>

      <text className="font-['Lato',sans-serif] font-bold" fontSize="33" fill="#050505">
        <textPath href="#engraving">DESIGNER HANS VAN VLIJMEN</textPath>
      </text>

      {/* Axis triad */}
      <g fontSize="12" className="font-['Liberation_Sans',sans-serif]">
        <ellipse cx="379" cy="1302" rx="4" ry="5" fill="#14601a" />
        <path d="M377 1308L396 1299" stroke="#c22424" strokeWidth="4" />
        <path d="M394 1293L404 1296L397 1303Z" fill="#a81c1c" />
        <path d="M378 1309L387 1326" stroke="#2626c8" strokeWidth="4" />
        <path d="M382 1327L390 1323L391 1334Z" fill="#1c1ca8" />
        <rect x="375" y="1305" width="4" height="4" fill="#222" />
        <text x="376" y="1299" fill="#2b8a2b" fontSize="10">Y</text>
        <text x="401" y="1297" fill="#d02020">X</text>
        <text x="388" y="1342" fill="#1a1ac0">Z</text>
      </g>
    </svg>
  );
}

// ─── Feature manager ──────────────────────────────────────────────────────────

function FeatureManager() {
  return (
    <aside className="relative flex w-[336px] min-h-0 flex-col border-r border-[#8c8c8c] bg-[#f7f7f7]">
      <div className="mt-[2px] mr-[2px] flex h-4 shrink-0 items-center justify-center border-y border-[#c8c8c8]">
        <span className="w-[7px] h-[7px] rounded-full border border-[#999] bg-[#d0d0d0]" />
      </div>

      {/* Manager tabs */}
      <div className="mt-1 mr-[2px] flex h-[26px] shrink-0 border-b border-[#c8c8c8]">
        <button aria-label="FeatureManager" className="flex w-10 items-center justify-center border-t border-r border-[#8c8c8c]">
          <PartIcon />
        </button>
        <button aria-label="PropertyManager" className="flex w-10 items-center justify-center border border-l-0 border-[#8c8c8c] bg-[#d0d0d0]">
          <Icon>
            <path d="M1.500 2.500h17v16h-17z" fill="#fff" strokeWidth="1.300" />
            <path d="M2 4h16" stroke={DARK_BLUE} strokeWidth="3" />
            <path d="M4 8h3v2H4zM4 12h3v2H4zM4 15.500h3v1H4z" stroke={DARK_BLUE} />
            <path d="M9 9h8M9 13h8M9 16h8" />
          </Icon>
        </button>
        <button aria-label="ConfigurationManager" className="flex w-10 items-center justify-center border border-l-0 border-[#8c8c8c] bg-[#d0d0d0]">
          <Icon>
            <path d="M3.500 1.500h3v17h-3zM6.500 4.500h4M6.500 13.500h5" fill="#eee" />
            <path d="M10.500 2.500h4v6h-4zM11.500 11.500l2-1.500 4 1v6l-2 1.500h-4z" fill="#eee" />
          </Icon>
        </button>
        <button aria-label="DimXpertManager" className="flex w-10 items-center justify-center border border-l-0 border-[#8c8c8c] bg-[#d0d0d0]">
          <Icon stroke="#222">
            <circle cx="10" cy="10" r="6" strokeWidth="2" />
            <path d="M10 1v18M1 10h18" strokeWidth="2" />
          </Icon>
        </button>
        <button aria-label="DisplayManager" className="flex w-10 items-center justify-center border border-b-0 border-l-0 border-[#8c8c8c] bg-white">
          <Ball />
        </button>
        <button aria-label="More managers" className="ml-auto w-4">
          <Icon className="w-4 h-4"><path d="M6 4l6 6-6 6" stroke="#666" strokeWidth="2.500" /></Icon>
        </button>
      </div>
      <div className="absolute left-[191px] top-[41px] rounded-[3px] border border-[#8a8a8a] bg-linear-to-b from-white to-[#e6e7f1] px-[5px] leading-[18px] text-[#666] shadow-[2px_2px_2px_#999]">
        DisplayManager
      </div>

      <div className="mx-[3px] flex h-[26px] shrink-0 items-center border border-t-0 border-[#c8c8c8] pl-px">
        <Icon>
          <path d="M1.500 2.500h16v3L12 11v5l-4 3v-8L1.500 5.500z" fill="#f5f5f5" strokeWidth="1.300" />
          <path d="M2 4h15" stroke={DARK_BLUE} strokeWidth="3" />
        </Icon>
      </div>

      <div className="flex min-h-0 flex-1">
        <div className="min-w-0 flex-1 overflow-hidden pt-px leading-[22px]">
          <div className="flex items-center gap-[3px] pl-[2px] whitespace-pre">
            <PartIcon />
            <span>{"Shower head  (Default<<Default>_Display State 1>)"}</span>
          </div>
          <ul>
            {TREE.map((item) => (
              <li key={item.label} className="flex h-[22px] items-center pl-2">
                <span className="w-4">
                  {item.open && (
                    <svg viewBox="0 0 4 8" className="w-1 h-2" aria-hidden="true">
                      <path d="M0 0l4 4-4 4z" fill="#555" />
                    </svg>
                  )}
                </span>
                {TREE_ICONS[item.icon]}
                <span className="ml-1 whitespace-nowrap">{item.label}</span>
              </li>
            ))}
          </ul>
        </div>
        {/* Scroll bar */}
        <div className="mr-[2px] flex w-[13px] flex-col items-center bg-[#f0f0f0]">
          <span className="flex h-[18px] items-center">
            <svg viewBox="0 0 6 4" className="w-[6px] h-1" aria-hidden="true"><path d="M0 4h6L3 0z" fill="#333" /></svg>
          </span>
          <span className="flex h-[736px] w-full flex-col items-center justify-center gap-px border border-r-0 border-[#999] bg-linear-to-r from-white to-[#c4c4c8]">
            <span className="h-px w-[7px] bg-[#444]" />
            <span className="h-px w-[7px] bg-[#444]" />
            <span className="h-px w-[7px] bg-[#444]" />
            <span className="h-px w-[7px] bg-[#444]" />
          </span>
          <span className="mt-auto flex h-[18px] items-center"><Caret /></span>
        </div>
      </div>

      <button
        aria-label="Collapse panel"
        className="absolute -right-[10px] top-[552px] flex h-[39px] w-[10px] items-center justify-center border border-l-0 border-[#8c8c8c] bg-[#f7f7f7]"
      >
        <span className="w-[6px] h-[6px] rounded-full border border-[#999] bg-[#d0d0d0]" />
      </button>
    </aside>
  );
}

function ModelTabs() {
  return (
    <div className="relative flex h-[15px] shrink-0 border-t border-[#8c8c8c] bg-[#f7f7f7] leading-[14px]">
      <div className="flex pl-[2px]">
        {[
          { label: "First", d: "M5 4v12M15 4v12l-8-6z" },
          { label: "Previous", d: "M13 4v12l-7-6z" },
          { label: "Next", d: "M7 4v12l7-6z" },
          { label: "Last", d: "M15 4v12M5 4v12l8-6z" },
        ].map((item) => (
          <button key={item.label} aria-label={item.label} className="flex w-4 items-center justify-center border-r border-[#999] bg-[#c4c4c4]">
            <Icon className="w-3 h-3" stroke="#999"><path d={item.d} fill="#999" /></Icon>
          </button>
        ))}
      </div>
      <button className="w-[57px] pl-1 text-center font-bold">Model</button>
      <button className="w-[69px] border-x border-[#8c8c8c] bg-[#d3d3d3] text-center">3D Views</button>
      <button className="w-[108px] border-r border-[#8c8c8c] bg-[#d3d3d3] pr-2 text-center">Motion Study 1</button>
    </div>
  );
}

// ─── Task pane ────────────────────────────────────────────────────────────────

const TASK_TABS: { label: string; icon: ReactNode }[] = [
  {
    label: "Resources",
    icon: (
      <Icon>
        <path d="M4 9v9.500h12V9" fill="#fff" strokeWidth="1.300" />
        <path d="M8.500 18v-6h4v6" />
        <path d="M1 11l9-8 9 8" stroke={DARK_BLUE} strokeWidth="2.600" />
      </Icon>
    ),
  },
  {
    label: "Design library",
    icon: (
      <Icon>
        <path d="M3 5l3-3 4 1v15l-3 .500-4-3zM7 5l3-3 4 1v14l-4 1.500M11 5l3-3 3 1v12l-4 3M3 5l4 1.500V18M7 5.500l4 1.500" fill="#eee" />
      </Icon>
    ),
  },
  {
    label: "File explorer",
    icon: (
      <Icon>
        <path d="M1.500 17V3.500h6l1 2h7V8" fill="#ddd" strokeWidth="1.300" />
        <path d="M1.500 17.500L6 8h13l-4 9.500z" fill="#eee" strokeWidth="1.300" />
      </Icon>
    ),
  },
  {
    label: "View palette",
    icon: (
      <Icon>
        <path d="M1.500 2.500h17v15h-17z" fill="#fff" strokeWidth="1.300" />
        <path d="M4 5h7v3H4zM13 5h3v3h-3zM7 10h3v3h2v3H4v-3h3z" fill="#f3c63a" stroke="#7a5c10" />
        <path d="M14 11h4v6h-4z" fill="#999" stroke="none" />
      </Icon>
    ),
  },
  { label: "Appearances", icon: <Ball /> },
  {
    label: "Custom properties",
    icon: (
      <Icon>
        <path d="M1.500 2.500h17v16h-17z" fill="#fff" strokeWidth="1.500" />
        <path d="M2 4h16" stroke={DARK_BLUE} strokeWidth="3" />
        <path d="M4 8h3v2H4zM4 12h3v2H4zM4 15.500h3v1H4z" stroke={DARK_BLUE} />
        <path d="M9 9h8M9 13h8M9 16h8" />
      </Icon>
    ),
  },
  {
    label: "Forum",
    icon: (
      <Icon>
        <path d="M1.500 3.500h11v8h-6l-3 3v-3h-2z" fill={BLUE} />
        <path d="M8.500 8.500h10v7h-2v3l-3-3h-5z" fill="#fff" />
      </Icon>
    ),
  },
];

function Splitter({ dots = false }: { dots?: boolean }) {
  return (
    <div className="ml-px flex h-[7px] items-center justify-center gap-[2px] border-y-2 border-t-[#a3a4b8] border-b-[#6d6e88] bg-[#c6c7d6]">
      {dots && [0, 1, 2].map((i) => (
        <svg key={i} viewBox="0 0 6 3" className="w-[6px] h-[3px]" aria-hidden="true"><path d="M0 3h6L3 0z" fill="#000" /></svg>
      ))}
    </div>
  );
}

function TaskPane() {
  return (
    <aside className="relative flex w-[309px] shrink-0 flex-col border-b border-l border-[#333] bg-[#f7f7f7]">
      {/* Vertical tab strip over the view */}
      <div className="absolute right-full top-[49px] flex w-[27px] flex-col border-t border-l border-[#8c8c8c]">
        {TASK_TABS.map((tab) => (
          <button
            key={tab.label}
            aria-label={tab.label}
            className={`flex h-6 items-center justify-center border-b border-[#8c8c8c] ${
              tab.label === "Appearances" ? "bg-[#f7f7f7]" : "bg-[#d3d3d3]"
            }`}
          >
            {tab.icon}
          </button>
        ))}
      </div>

      <div className="flex h-[18px] items-center border-b border-black bg-[#a9abaf] px-[6px] font-bold">
        <button aria-label="Collapse task pane">
          <Icon className="w-3 h-3" stroke="#222"><path d="M9 3l-6 7 6 7M17 3l-6 7 6 7" strokeWidth="2" /></Icon>
        </button>
        <h2 className="flex-1 text-center">Appearances, Scenes, and Decals</h2>
        <button aria-label="Pin task pane">
          <Icon className="w-3 h-3" stroke="none">
            <path d="M12 0l8 8-2 1-2-1-4 4v6l-4-4-8 6 6-8-4-4h6l4-4z" fill="#222" />
          </Icon>
        </button>
      </div>

      <div className="flex h-[34px] shrink-0 items-center border-b border-[#b0b0b0] pl-[2px]">
        <button aria-label="Back" className="flex w-[27px] justify-center">
          <Icon className="w-4 h-4" stroke="#c0c0c0">
            <circle cx="10" cy="10" r="9" strokeWidth="1.500" />
            <path d="M9 5v10l-5-5zM9 8.500h6v3H9z" fill="#c0c0c0" />
          </Icon>
        </button>
        <button aria-label="Forward" className="flex w-[27px] justify-center">
          <Icon className="w-4 h-4" stroke="#c0c0c0">
            <circle cx="10" cy="10" r="9" strokeWidth="1.500" />
            <path d="M11 5v10l5-5zM5 8.500h6v3H5z" fill="#c0c0c0" />
          </Icon>
        </button>
        <button aria-label="Recent" className="flex w-[18px] justify-center"><Caret /></button>
        <button aria-label="Edit appearance" className="flex w-[27px] justify-center">
          <Icon stroke="#c0c0c0">
            <circle cx="9" cy="9" r="7.500" fill="#d0d0d0" />
            <path d="M9 19l2-5 6-5 3 3-7 6z" fill="#eee" />
          </Icon>
        </button>
        <button aria-label="Add to library" className="flex w-[27px] justify-center">
          <Icon stroke="#c6c6c6">
            <path d="M5 7l3-2 2 1v12l-3-1zM9 6l3-2 2 1v12l-4 1M13 5l3-2 2 1v11l-4 2M1 4h6M4 1v6M2 2l4 4" strokeWidth="1.300" />
          </Icon>
        </button>
        <button aria-label="Add folder" className="flex w-[27px] justify-center">
          <Icon stroke="#c6c6c6">
            <path d="M3 8v10h13l3-9H7l-3 8M8 6h8v3M1 4h6M4 1v6M2 2l4 4" strokeWidth="1.300" />
          </Icon>
        </button>
        <button aria-label="Refresh" className="flex w-[27px] justify-center">
          <Icon stroke="#3d83a5">
            <path d="M3 8q2-5 7-5 4 0 6 2M17 12q-2 5-7 5-4 0-6-2" strokeWidth="3.400" />
            <path d="M18 1v8h-8zM2 19v-8h8z" fill="#3d83a5" stroke="#1e5470" strokeWidth=".5" />
          </Icon>
        </button>
        <button aria-label="Up" className="flex w-[27px] justify-center">
          <Icon className="w-4 h-4" stroke="#c0c0c0"><path d="M10 1l6 7h-4v10H8V8H4z" fill="#ddd" strokeWidth="1.500" /></Icon>
        </button>
      </div>

      <ul className="h-[331px] shrink-0 pt-[7px]">
        {[
          { label: "Appearances(color)", icon: <Ball /> },
          { label: "Scenes", icon: <SceneBall /> },
          {
            label: "Decals",
            icon: (
              <Icon>
                <path d="M3.500 4v12c0 3 13 3 13 0V4" fill="#e8e8e8" />
                <ellipse cx="10" cy="4" rx="6.500" ry="2.500" fill="#fff" />
                <path d="M6.500 9h7v6h-7z" fill={BLUE} stroke="#1e5470" />
              </Icon>
            ),
          },
        ].map((item) => (
          <li key={item.label} className="flex h-[22px] items-center pl-3">
            <svg viewBox="0 0 6 10" className="w-[6px] h-[10px]" fill="#fff" stroke="#999" aria-hidden="true">
              <path d="M.5 1l4.500 4-4.500 4z" />
            </svg>
            <span className="ml-2 mr-[6px]">{item.icon}</span>
            <span>{item.label}</span>
          </li>
        ))}
      </ul>

      <Splitter />
      <p className="ml-[6px] mr-[2px] my-[5px] h-[61px] border border-black bg-[#ffff80] pt-[3px] text-center leading-[14px]">
        Select items to drag and drop.
      </p>
      <Splitter dots />
    </aside>
  );
}

// ─── App ──────────────────────────────────────────────────────────────────────

export default function App() {
  return (
    <div className="flex h-screen min-w-[1280px] flex-col overflow-hidden bg-[#f7f7f7] font-['Open_Sans','Noto_Sans',sans-serif] text-[11px] leading-4 text-black">
      <TitleBar />
      <Toolbars />
      <Ribbon />

      <main className="flex min-h-0 flex-1">
        <div className="flex min-w-0 flex-1 flex-col">
          <section className="relative flex min-h-0 flex-1 flex-col">
            <Viewport />
            <CommandTabs />
            <div className="relative -mt-2 flex min-h-0 flex-1">
              <FeatureManager />
            </div>
          </section>
          <ModelTabs />
        </div>
        <TaskPane />
      </main>

      <footer className="flex h-[19px] shrink-0 items-center border-t border-[#8c8c8c] pl-px">
        <span>SOLIDWORKS Premium 2017 x64 Edition</span>
        <div className="ml-auto flex h-4 items-center">
          <span className="mr-[7px] h-4 border-l border-[#ccc]" />
          <span className="flex h-4 w-[72px] items-center justify-center border-x border-[#ccc]">Editing Part</span>
          <span className="ml-[15px] h-4 border-l border-[#ccc]" />
          <button className="ml-8 flex items-center gap-[19px]">
            MMGS
            <svg viewBox="0 0 6 4" className="w-[6px] h-1" aria-hidden="true"><path d="M0 4h6L3 0z" fill="#333" /></svg>
          </button>
          <Icon className="ml-[66px] mr-1 w-4 h-4">
            <path d="M2 6l9-4 8 6-6 10-9-6z" fill="#e5e5e5" strokeWidth="1.300" />
            <circle cx="8" cy="7" r="2.500" />
            <path d="M9 13l7-5M11 16l7-6" />
          </Icon>
        </div>
      </footer>
    </div>
  );
}
